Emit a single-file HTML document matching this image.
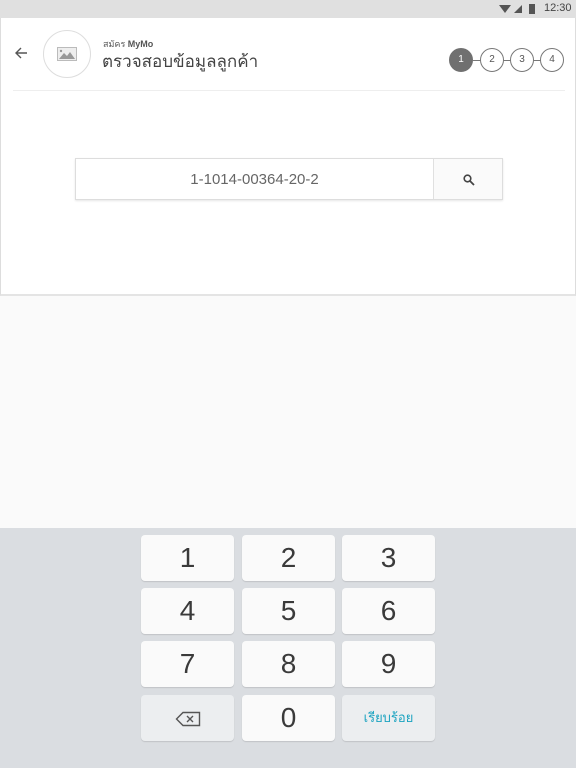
<!DOCTYPE html>
<html><head><meta charset="utf-8"><style>
*{box-sizing:border-box;margin:0;padding:0}
body{width:576px;height:768px;background:#fafafa;font-family:"Liberation Sans","Noto Sans CJK SC",sans-serif;position:relative;overflow:hidden}
.sb{position:absolute;left:0;top:0;width:576px;height:18px;background:#e0e0e0;color:#444;font-size:11px}
.card{position:absolute;left:0;top:18px;width:576px;height:278px;background:#fff;border:1px solid #ddd;border-top:none;border-bottom:2px solid #e4e4e4}
.abs{position:absolute}
.step{position:absolute;top:48px;width:24px;height:24px;border-radius:50%;border:1px solid #777;font-size:10px;color:#555;text-align:center;line-height:22px;background:#fff}
.kb{position:absolute;left:0;top:528px;width:576px;height:240px;background:#dadde1}
.k{position:absolute;width:93px;height:46px;background:#fafafa;border-radius:4px;box-shadow:0 1px 1px rgba(0,0,0,.12);text-align:center;line-height:46px;font-size:28px;color:#3a3a3a;font-weight:300}
</style></head><body>
<div class="sb">
<svg class="abs" style="left:499px;top:3px" width="42" height="12"><path d="M0 2 L12 2 L6 10Z" fill="#555"/><path d="M15 10 L23 2 L23 10Z" fill="#555"/><rect x="30" y="1" width="6" height="10" fill="#555"/></svg>
<span class="abs" style="left:544px;top:2px">12:30</span>
</div>
<div class="card">
<svg class="abs" style="left:13px;top:28px" width="14" height="14"><path d="M13 7H2M7 2L2 7L7 12" stroke="#555" stroke-width="1.4" fill="none"/></svg>
<div class="abs" style="left:42px;top:12px;width:48px;height:48px;border-radius:50%;border:1px solid #ddd"></div>
<svg class="abs" style="left:56px;top:29px" width="20" height="14"><rect x="0.5" y="0.5" width="19" height="13" fill="#eee" stroke="#bbb"/><path d="M2 12 L7 6 L10 9 L13 5 L18 12Z" fill="#999"/><circle cx="4" cy="4" r="1.2" fill="#999"/></svg>
<div class="abs" style="left:102px;top:19px;font-size:9px;color:#555">สมัคร <b>MyMo</b></div>
<div class="abs" style="left:101px;top:30px;font-size:17px;color:#444">ตรวจสอบข้อมูลลูกค้า</div>
<div class="abs" style="left:472px;top:42px;width:80px;height:1px;background:#777"></div>
<div class="step" style="left:448px;top:30px;background:#707070;border-color:#707070;color:#fff">1</div>
<div class="step" style="left:479px;top:30px">2</div>
<div class="step" style="left:509px;top:30px">3</div>
<div class="step" style="left:539px;top:30px">4</div>
<div class="abs" style="left:12px;top:72px;width:552px;height:1px;background:#eee"></div>
<div class="abs" style="left:74px;top:140px;width:428px;height:42px;border:1px solid #ddd;box-shadow:0 1px 2px rgba(0,0,0,.1);background:#fff">
<div class="abs" style="left:0;top:1px;width:357px;height:40px;line-height:40px;text-align:center;font-size:15px;color:#666">1-1014-00364-20-2</div>
<div class="abs" style="left:357px;top:0;width:69px;height:40px;background:#fafafa;border-left:1px solid #e0e0e0"></div>
<svg class="abs" style="left:387px;top:15px" width="12" height="12"><circle cx="4.5" cy="4.5" r="3.3" stroke="#444" stroke-width="1.6" fill="none"/><path d="M7 7L11 11" stroke="#444" stroke-width="1.8"/></svg>
</div>
</div>
<div class="kb">
<div class="k" style="left:141px;top:7px">1</div><div class="k" style="left:242px;top:7px">2</div><div class="k" style="left:342px;top:7px">3</div>
<div class="k" style="left:141px;top:60px">4</div><div class="k" style="left:242px;top:60px">5</div><div class="k" style="left:342px;top:60px">6</div>
<div class="k" style="left:141px;top:113px">7</div><div class="k" style="left:242px;top:113px">8</div><div class="k" style="left:342px;top:113px">9</div>
<div class="k" style="left:141px;top:167px;background:#eceef0"><svg style="margin-top:15px" width="26" height="16"><path d="M8 1.5H24.5V14.5H8L1.5 8Z" stroke="#555" stroke-width="1.4" fill="none"/><path d="M12 5L18 11M18 5L12 11" stroke="#555" stroke-width="1.4"/></svg></div>
<div class="k" style="left:242px;top:167px">0</div>
<div class="k" style="left:342px;top:167px;background:#eceef0;font-size:13px;color:#1ba3c0;font-weight:normal">เรียบร้อย</div>
</div>
</body></html>
